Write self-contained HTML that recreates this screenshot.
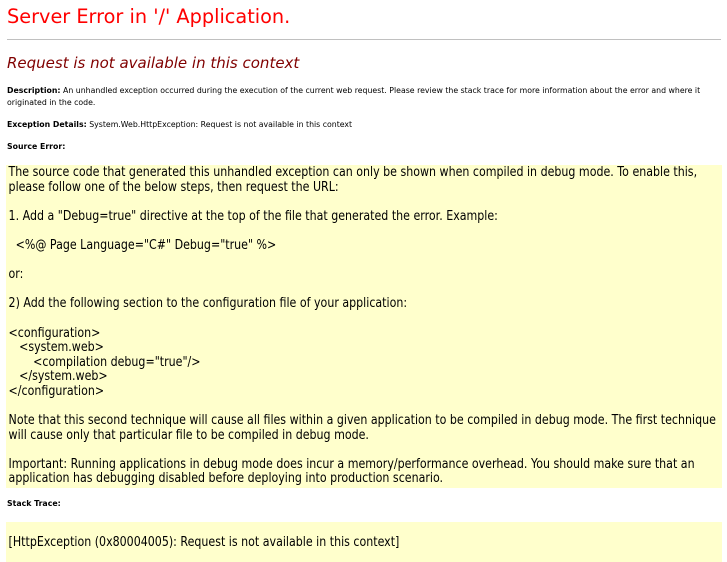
<!DOCTYPE html>
<html><head><meta charset="utf-8"><style>
body{margin:0;width:727px;height:545px;overflow:hidden;background:#fff;font-family:"DejaVu Sans",Verdana,sans-serif;color:#000;position:relative}
.a{position:absolute;white-space:nowrap}
h1{position:absolute;left:7px;top:5px;margin:0;font-weight:normal;font-size:19.3px;color:red}
hr{position:absolute;left:7px;top:39px;width:714px;margin:0;border:0;border-top:1px solid #c0c0c0}
h2{position:absolute;left:7px;top:54px;margin:0;font-weight:normal;font-style:italic;font-size:15px;color:maroon}
.s{font-size:7.8px;line-height:12px}
b{font-weight:bold}
.box{position:absolute;left:6px;width:716px;background:#ffffcc;overflow:hidden}
pre{margin:0;padding:0 3px;font-family:"DejaVu Sans",sans-serif;font-size:13px;line-height:14.6px;white-space:pre;transform:scaleX(0.85);transform-origin:0 0}
</style></head><body>
<h1>Server Error in '/' Application.</h1>
<hr>
<h2>Request is not available in this context</h2>
<div class="a s" style="left:7px;top:85px"><b>Description:</b> An unhandled exception occurred during the execution of the current web request. Please review the stack trace for more information about the error and where it<br>originated in the code.</div>
<div class="a s" style="left:7px;top:119px"><b>Exception Details:</b> System.Web.HttpException: Request is not available in this context</div>
<div class="a s" style="left:7px;top:141px"><b>Source Error:</b></div>
<div class="box" style="top:165px;height:323px"><pre style="padding-top:1px">The source code that generated this unhandled exception can only be shown when compiled in debug mode. To enable this,
please follow one of the below steps, then request the URL:

1. Add a "Debug=true" directive at the top of the file that generated the error. Example:

  &lt;%@ Page Language="C#" Debug="true" %&gt;

or:

2) Add the following section to the configuration file of your application:

&lt;configuration&gt;
   &lt;system.web&gt;
       &lt;compilation debug="true"/&gt;
   &lt;/system.web&gt;
&lt;/configuration&gt;

Note that this second technique will cause all files within a given application to be compiled in debug mode. The first technique
will cause only that particular file to be compiled in debug mode.

Important: Running applications in debug mode does incur a memory/performance overhead. You should make sure that an
application has debugging disabled before deploying into production scenario.</pre></div>
<div class="a s" style="left:7px;top:498px"><b>Stack Trace:</b></div>
<div class="box" style="top:522px;height:40px"><pre style="padding-top:14px">[HttpException (0x80004005): Request is not available in this context]</pre></div>
</body></html>
